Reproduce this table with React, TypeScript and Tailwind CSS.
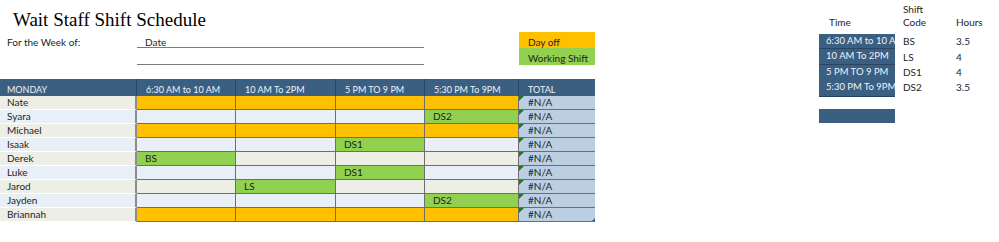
const HEAD = "bg-[#3b5f80] text-[#eef3f8]";

type Cell = "off" | "" | string;

type Row = { name: string; cells: Cell[] };

const rows: Row[] = [
  { name: "Nate", cells: ["off", "off", "off", "off"] },
  { name: "Syara", cells: ["", "", "", "DS2"] },
  { name: "Michael", cells: ["off", "off", "off", "off"] },
  { name: "Isaak", cells: ["", "", "DS1", ""] },
  { name: "Derek", cells: ["BS", "", "", ""] },
  { name: "Luke", cells: ["", "", "DS1", ""] },
  { name: "Jarod", cells: ["", "LS", "", ""] },
  { name: "Jayden", cells: ["", "", "", "DS2"] },
  { name: "Briannah", cells: ["off", "off", "off", "off"] },
];

const times = ["6:30 AM to 10 AM", "10 AM To 2PM", "5 PM TO 9 PM", "5:30 PM To 9PM"];

const codes = [
  { time: "6:30 AM to 10 AM", code: "BS", hours: "3.5", h: "h-[15px]" },
  { time: "10 AM To 2PM", code: "LS", hours: "4", h: "h-[16px]" },
  { time: "5 PM TO 9 PM", code: "DS1", hours: "4", h: "h-[13px]" },
  { time: "5:30 PM To 9PM", code: "DS2", hours: "3.5", h: "h-[19px]" },
];

function cellBg(value: Cell, index: number) {
  if (value === "off") return "bg-[#ffc000]";
  if (value) return "bg-[#92d050]";
  return index % 2 === 0 ? "bg-[#edeee6]" : "bg-[#e8eff6]";
}

export default function App() {
  return (
    <div className="w-[999px] h-[242px] bg-white flex font-['Lato',_'Open_Sans',_sans-serif] text-[10px] text-[#1e1e1e]">
      {/* schedule */}
      <div className="w-[595px] flex flex-col">
        <div className="h-[32px] pl-[13px] pt-[10px] font-['Liberation_Serif',_serif] text-[19px] leading-[19px] text-black">
          Wait Staff Shift Schedule
        </div>

        <div className="grid grid-cols-[137px_288px_94px_76px] grid-rows-[16px_17px]">
          <div className="pl-[7px] pt-[3px]">For the Week of:</div>
          <div className="pl-[8px] pt-[3px] mr-[1px] border-b border-[#7a7a7a]">Date</div>
          <div />
          <div className="bg-[#ffc000] pl-[9px] pt-[3px]">Day off</div>
          <div />
          <div className="mr-[1px] border-b border-[#7a7a7a]" />
          <div />
          <div className="bg-[#92d050] pl-[9px] pt-[3px]">Working Shift</div>
        </div>

        <div className="mt-[14px] grid grid-cols-[137px_99px_100px_89px_94px_76px] grid-rows-[17px] auto-rows-[14px]">
          <div className={`${HEAD} text-[9px] pl-[7px] pt-[4px] border-r border-[#2a4560]`}>MONDAY</div>
          {times.map((t) => (
            <div key={t} className={`${HEAD} text-[9px] pl-[9px] pt-[4px] border-r border-[#2a4560]`}>
              {t}
            </div>
          ))}
          <div className={`${HEAD} text-[9px] pl-[9px] pt-[4px]`}>TOTAL</div>

          {rows.map((row, i) => (
            <>
              <div
                key={row.name}
                className={`pl-[7px] leading-[13px] border-b border-white border-r-2 border-r-[#8c8c8c] ${
                  i % 2 === 0 ? "bg-[#edeee6]" : "bg-[#e8eff6]"
                }`}
              >
                {row.name}
              </div>
              {row.cells.map((c, j) => (
                <div
                  key={`${row.name}-${j}`}
                  className={`pl-[8px] leading-[13px] border-b border-r border-[#6e6e6e] ${cellBg(c, i)}`}
                >
                  {c === "off" ? "" : c}
                </div>
              ))}
              <div
                key={`${row.name}-total`}
                className="relative pl-[9px] leading-[13px] bg-[#bccfe2] border-b border-[#6e6e6e]"
              >
                <span className="absolute left-0 top-0 w-0 h-0 border-t-[5px] border-t-[#1f7a1f] border-r-[5px] border-r-transparent" />
                {i === rows.length - 1 && (
                  <span className="absolute right-0 bottom-0 w-0 h-0 border-b-[3px] border-b-[#2e5aa8] border-l-[3px] border-l-transparent" />
                )}
                #N/A
              </div>
            </>
          ))}
        </div>
      </div>

      {/* shift code key */}
      <div className="ml-[224px] flex flex-col">
        <div className="grid grid-cols-[76px_61px_40px]">
          <div />
          <div className="pl-[8px] pt-[3px] h-[15px] leading-[12px]">Shift</div>
          <div />
          <div className="pl-[10px] h-[19px] leading-[14px]">Time</div>
          <div className="pl-[8px] h-[19px] leading-[14px]">Code</div>
          <div className="h-[19px] leading-[14px]">Hours</div>
        </div>
        {codes.map((c) => (
          <div key={c.code} className={`grid grid-cols-[76px_61px_40px] ${c.h}`}>
            <div className={`${HEAD} text-[9.5px] pl-[7px] overflow-hidden whitespace-nowrap border-b border-[#2a4560] flex items-center`}>
              {c.time}
            </div>
            <div className="pl-[8px] flex items-center">{c.code}</div>
            <div className="flex items-center">{c.hours}</div>
          </div>
        ))}
        <div className="mt-[12px] w-[76px] h-[14px] bg-[#3b5f80]" />
      </div>
    </div>
  );
}
